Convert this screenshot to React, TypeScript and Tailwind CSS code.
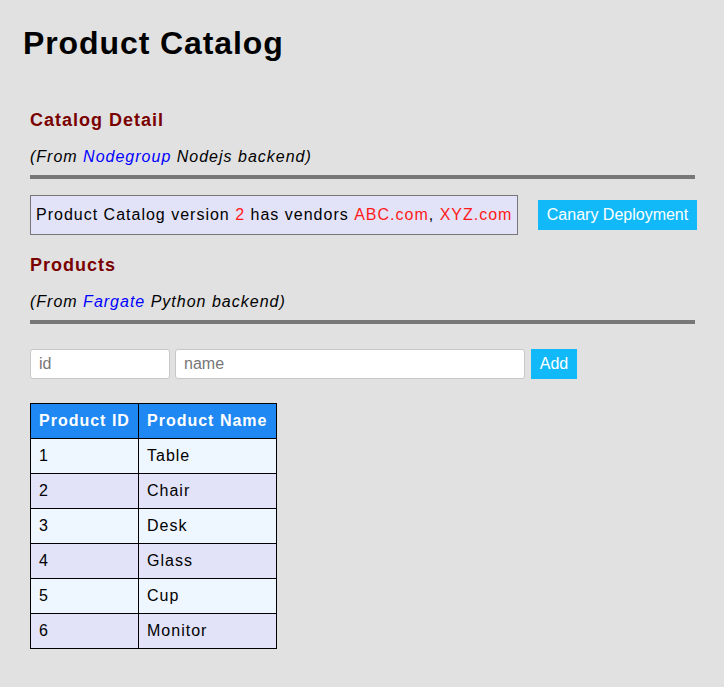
const products = [
  { id: "1", name: "Table" },
  { id: "2", name: "Chair" },
  { id: "3", name: "Desk" },
  { id: "4", name: "Glass" },
  { id: "5", name: "Cup" },
  { id: "6", name: "Monitor" },
];

export default function App() {
  return (
    <div className="min-h-[687px] bg-[#e1e1e1] font-['Liberation_Sans',Arial,sans-serif] text-black">
      <div className="px-[23px] pt-[24px]">
        <h1 className="text-[32px] font-bold leading-[38px] tracking-[0.9px]">Product Catalog</h1>
      </div>

      <div className="px-[30px] pt-[47px]">
        {/* Catalog detail */}
        <h2 className="text-[18px] font-bold leading-[22px] tracking-[1px] text-[#7a0000]">Catalog Detail</h2>
        <p className="mt-[16px] text-[16px] italic leading-[20px] tracking-[1px]">
          (From <span className="text-[#0000ff]">Nodegroup</span> Nodejs backend)
        </p>
        <div className="mt-[8px] h-[4px] w-[665px] bg-[#777777]" />

        <div className="mt-[16px] flex items-center">
          <div className="flex h-[40px] w-[488px] shrink-0 items-center whitespace-nowrap border border-[#777777] bg-[#e2e2f8] px-[5px] text-[16px] tracking-[1px]">
            Product Catalog version&nbsp;<span className="text-[#ff1a1a]">2</span>&nbsp;has vendors&nbsp;
            <span className="text-[#ff1a1a]">ABC.com</span>,&nbsp;<span className="text-[#ff1a1a]">XYZ.com</span>
          </div>
          <button className="ml-[20px] h-[30px] w-[159px] shrink-0 whitespace-nowrap bg-[#11b9f9] text-[16px] text-white">
            Canary Deployment
          </button>
        </div>

        {/* Products */}
        <h2 className="mt-[19px] text-[18px] font-bold leading-[22px] tracking-[1px] text-[#7a0000]">Products</h2>
        <p className="mt-[16px] text-[16px] italic leading-[20px] tracking-[1px]">
          (From <span className="text-[#0000ff]">Fargate</span> Python backend)
        </p>
        <div className="mt-[8px] h-[4px] w-[665px] bg-[#777777]" />

        <div className="mt-[25px] flex items-center gap-[5px]">
          <input
            placeholder="id"
            className="h-[30px] w-[140px] rounded-[3px] border border-[#c8c8c8] bg-white px-[8px] text-[16px] placeholder:text-[#777777] outline-none"
          />
          <input
            placeholder="name"
            className="h-[30px] w-[350px] rounded-[3px] border border-[#c8c8c8] bg-white px-[8px] text-[16px] placeholder:text-[#777777] outline-none"
          />
          <button className="ml-[1px] h-[30px] w-[46px] bg-[#11b9f9] text-[16px] text-white">Add</button>
        </div>

        <table className="mt-[24px] border-collapse text-[16px] tracking-[1px]">
          <thead>
            <tr className="bg-[#1f88f2] text-white">
              <th className="h-[35px] w-[108px] border border-black px-[8px] text-left font-bold">Product ID</th>
              <th className="h-[35px] w-[138px] border border-black px-[8px] text-left font-bold">Product Name</th>
            </tr>
          </thead>
          <tbody>
            {products.map((p, i) => (
              <tr key={p.id} className={i % 2 === 0 ? "bg-[#eef6ff]" : "bg-[#e2e2f8]"}>
                <td className="h-[35px] border border-black px-[8px]">{p.id}</td>
                <td className="h-[35px] border border-black px-[8px]">{p.name}</td>
              </tr>
            ))}
          </tbody>
        </table>
      </div>
    </div>
  );
}
